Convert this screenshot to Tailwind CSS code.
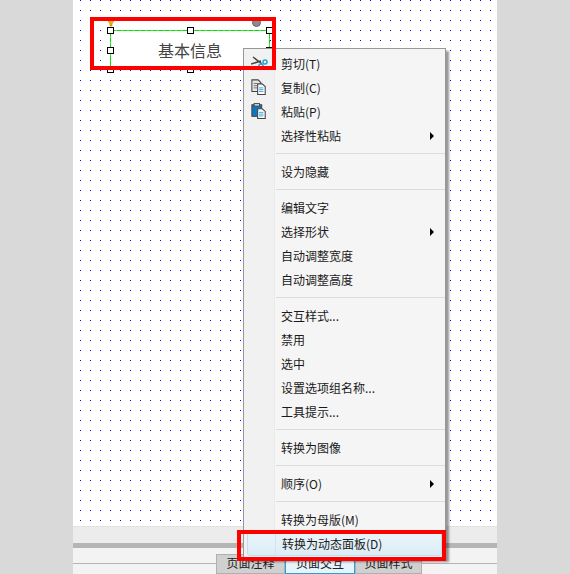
<!DOCTYPE html>
<html lang="zh">
<head>
<meta charset="utf-8">
<script src="https://cdn.jsdelivr.net/npm/@tailwindcss/browser@4"></script>
</head>
<body class="m-0 bg-[#d9d9d9] font-['Noto_Sans_CJK_SC','Noto_Sans',sans-serif]">
<div class="relative w-[570px] h-[574px] overflow-hidden bg-[#d9d9d9] flex justify-center">
  <main class="w-[424px] h-full flex flex-col">
    <section class="relative h-[526px] bg-white shrink-0">
      <svg class="absolute inset-0" width="424" height="526" aria-hidden="true">
        <defs><pattern id="dots" x="7" y="0" width="10" height="10" patternUnits="userSpaceOnUse"><rect width="1" height="1" fill="#0000ff"/></pattern></defs>
        <rect width="424" height="526" fill="url(#dots)"/>
      </svg>
    </section>
    <div class="h-[17px] bg-[#ececec] border-t border-[#e2e2e2] shrink-0"></div>
    <div class="h-[5px] bg-[#b5b5b5] shrink-0"></div>
    <div class="relative flex-1 bg-[#f3f3f3]">
      <div class="absolute left-0 right-0 top-[15px] h-px bg-[#b5b5b5]"></div>
      <div class="absolute left-[143px] top-[6px] flex text-[12px] leading-[16px] text-[#222]">
        <span class="w-[69px] h-[20px] bg-[#d0d0d0] border border-[#b0b0b0] text-center">页面注释</span>
        <span class="w-[70px] h-[20px] bg-[#e6f4fb] border border-[#2aa0d8] text-center">页面交互</span>
        <span class="w-[67px] h-[20px] bg-[#d0d0d0] border border-[#b0b0b0] text-center">页面样式</span>
      </div>
    </div>
  </main>

  <!-- selected widget -->
  <div class="absolute left-[110px] top-[30px] w-[160px] h-[40px] bg-white flex items-center justify-center text-[16px] text-[#444]">基本信息
    <svg class="absolute inset-0" width="160" height="40" aria-hidden="true"><rect x="0.5" y="0.5" width="159" height="39" fill="none" stroke="#90ee90"/><rect x="0.5" y="0.5" width="159" height="39" fill="none" stroke="#00e000" stroke-dasharray="5 1"/></svg>
  </div>
  <svg class="absolute left-[106px] top-[17px]" width="10" height="10" aria-hidden="true"><path d="M1 2h8L6 7v2H4V7z" fill="#f0b400" stroke="#a07800" stroke-width=".5"/></svg>
  <div class="absolute left-[252px] top-[18px] w-[9px] h-[9px] rounded-full bg-[#8c8c8c] border border-[#666]"></div>
  <div class="absolute left-[107px] top-[27px] w-[7px] h-[7px] bg-white border border-black"></div>
  <div class="absolute left-[187px] top-[27px] w-[7px] h-[7px] bg-white border border-black"></div>
  <div class="absolute left-[266px] top-[27px] w-[7px] h-[7px] bg-white border border-black"></div>
  <div class="absolute left-[107px] top-[47px] w-[7px] h-[7px] bg-white border border-black"></div>
  <div class="absolute left-[266px] top-[47px] w-[7px] h-[7px] bg-white border border-black"></div>
  <div class="absolute left-[107px] top-[66px] w-[7px] h-[7px] bg-white border border-black"></div>
  <div class="absolute left-[187px] top-[66px] w-[7px] h-[7px] bg-white border border-black"></div>

  <!-- context menu -->
  <div class="absolute left-[243px] top-[48px] w-[203px] h-[511px] bg-[#f5f5f5] border border-[#979797] shadow-[3px_3px_2px_rgba(0,0,0,0.4)] py-[3px] text-[12px] text-[#1a1a1a]">
    <div class="absolute left-0 top-0 bottom-0 w-[31px] bg-[#f1f1f1] border-r border-[#ebebeb]"></div>
    <div class="relative flex flex-col">
      <div class="h-6 pl-[37px] flex items-center">
        <svg class="absolute left-[7px] top-[3px]" width="18" height="15" viewBox="0 0 18 15" aria-hidden="true"><path d="M2 2L11 9M0 9L10 6" stroke="#444" stroke-width="1.5" fill="none"/><circle cx="14" cy="7" r="2" fill="none" stroke="#2aa0d8" stroke-width="1.5"/><circle cx="10" cy="11" r="2" fill="none" stroke="#2aa0d8" stroke-width="1.5"/></svg>
        剪切(T)</div>
      <div class="h-6 pl-[37px] flex items-center">
        <svg class="absolute left-[7px] top-[27px]" width="16" height="16" viewBox="0 0 18 18" aria-hidden="true"><path d="M1 1h7l3 3v10H1z" fill="#e8e8e8" stroke="#444" stroke-width="1.2"/><path d="M3 5h4M3 7.5h4M3 10h4" stroke="#666"/><path d="M7.5 5.5h5l3.5 3v9H7.5z" fill="#fff" stroke="#444" stroke-width="1.2"/><path d="M9 10h5M9 12h5M9 14h5" stroke="#2aa0d8"/></svg>
        复制(C)</div>
      <div class="h-6 pl-[37px] flex items-center">
        <svg class="absolute left-[7px] top-[51px]" width="16" height="16" viewBox="0 0 18 18" aria-hidden="true"><rect x="1" y="2" width="11" height="13" fill="#0c78c4" stroke="#444" stroke-width="1.2"/><rect x="3.5" y="0.5" width="6" height="3" fill="#ccc" stroke="#444"/><path d="M7.5 6.5h5l3.5 3v8H7.5z" fill="#fff" stroke="#444" stroke-width="1.2"/><path d="M9 10.5h5M9 12.5h5M9 14.5h5" stroke="#2aa0d8"/></svg>
        粘贴(P)</div>
      <div class="h-6 pl-[37px] pr-[11px] flex items-center justify-between">选择性粘贴<span class="w-0 h-0 border-y-[4px] border-y-transparent border-l-[4px] border-l-black"></span></div>
      <div class="h-3 ml-[31px] pl-[1px] pt-[5px]"><div class="w-full h-px mr-[4px] bg-[#dcdcdc]"></div></div>
      <div class="h-6 pl-[37px] flex items-center">设为隐藏</div>
      <div class="h-3 ml-[31px] pl-[1px] pt-[5px]"><div class="w-full h-px mr-[4px] bg-[#dcdcdc]"></div></div>
      <div class="h-6 pl-[37px] flex items-center">编辑文字</div>
      <div class="h-6 pl-[37px] pr-[11px] flex items-center justify-between">选择形状<span class="w-0 h-0 border-y-[4px] border-y-transparent border-l-[4px] border-l-black"></span></div>
      <div class="h-6 pl-[37px] flex items-center">自动调整宽度</div>
      <div class="h-6 pl-[37px] flex items-center">自动调整高度</div>
      <div class="h-3 ml-[31px] pl-[1px] pt-[5px]"><div class="w-full h-px mr-[4px] bg-[#dcdcdc]"></div></div>
      <div class="h-6 pl-[37px] flex items-center">交互样式...</div>
      <div class="h-6 pl-[37px] flex items-center">禁用</div>
      <div class="h-6 pl-[37px] flex items-center">选中</div>
      <div class="h-6 pl-[37px] flex items-center">设置选项组名称...</div>
      <div class="h-6 pl-[37px] flex items-center">工具提示...</div>
      <div class="h-3 ml-[31px] pl-[1px] pt-[5px]"><div class="w-full h-px mr-[4px] bg-[#dcdcdc]"></div></div>
      <div class="h-6 pl-[37px] flex items-center">转换为图像</div>
      <div class="h-3 ml-[31px] pl-[1px] pt-[5px]"><div class="w-full h-px mr-[4px] bg-[#dcdcdc]"></div></div>
      <div class="h-6 pl-[37px] pr-[11px] flex items-center justify-between">顺序(O)<span class="w-0 h-0 border-y-[4px] border-y-transparent border-l-[4px] border-l-black"></span></div>
      <div class="h-3 ml-[31px] pl-[1px] pt-[5px]"><div class="w-full h-px mr-[4px] bg-[#dcdcdc]"></div></div>
      <div class="h-6 pl-[37px] flex items-center">转换为母版(M)</div>
      <div class="relative h-6 mx-[3px] pl-[34px] flex items-center bg-linear-to-b from-[#eaf4fa] to-[#dcedf6] border border-[#c0e0ee] rounded-[3px]">
        <span class="absolute left-[27px] top-0 bottom-0 w-px bg-[#cfe4ef]"></span>转换为动态面板(D)</div>
    </div>
  </div>

  <!-- annotation boxes -->
  <div class="absolute left-[90px] top-[17px] w-[186px] h-[53px] border-[4px] border-[#ff0000]"></div>
  <div class="absolute left-[237px] top-[530px] w-[209px] h-[31px] border-[4px] border-[#ff0000]"></div>
</div>
</body>
</html>
